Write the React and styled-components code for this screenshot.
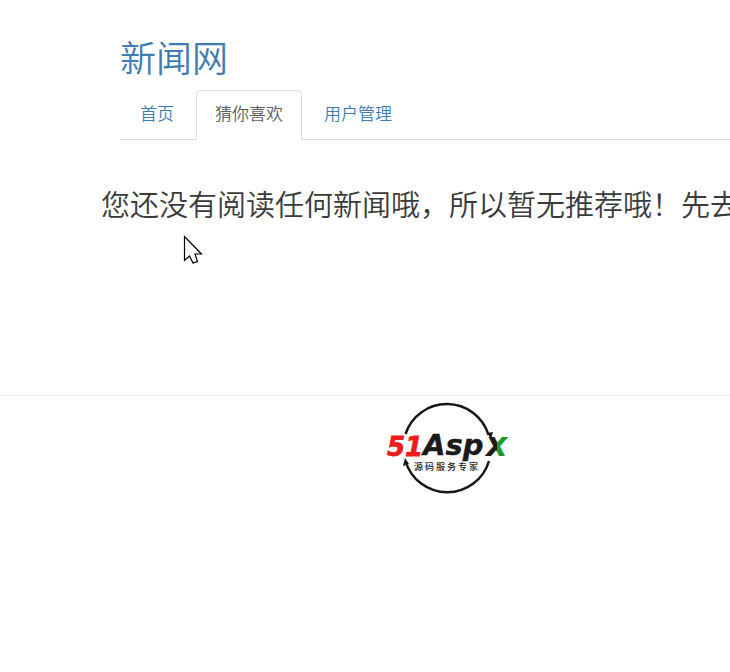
import React from "react";
import styled, { createGlobalStyle } from "styled-components";

const GlobalStyle = createGlobalStyle`
  * { box-sizing: border-box; }
  body {
    margin: 0;
    background: #fff;
    color: #3a3a3a;
    font-family: "Noto Sans CJK SC", sans-serif;
    overflow-x: hidden;
  }
`;

const Page = styled.div`
  position: relative;
  min-height: 100vh;
  overflow: hidden;
`;

const Header = styled.header`
  padding: 32px 0 0 120px;
`;

const Brand = styled.h1`
  margin: 0;
  font-size: 36px;
  font-weight: 350;
  line-height: 48px;
`;

const BrandLink = styled.a`
  color: #417cb0;
  text-decoration: none;
`;

const Tabs = styled.ul`
  display: flex;
  gap: 3px;
  margin: 10px 0 0;
  padding: 0 0 0 1px;
  list-style: none;
  border-bottom: 1px solid #ddd;
`;

const Tab = styled.li`
  margin-bottom: -1px;
`;

const TabLink = styled.a`
  display: block;
  padding: 10px 18px 14px;
  border: 1px solid ${(p) => (p.$active ? "#ddd" : "transparent")};
  border-bottom-color: ${(p) => (p.$active ? "#fff" : "transparent")};
  border-radius: 5px 5px 0 0;
  background: ${(p) => (p.$active ? "#fff" : "transparent")};
  color: ${(p) => (p.$active ? "#5c5c5c" : "#417cb0")};
  font-size: 17px;
  font-weight: 350;
  line-height: 24px;
  text-decoration: none;
`;

const Main = styled.main`
  padding: 43px 0 172px 101px;
`;

const Message = styled.h2`
  margin: 0;
  font-size: 29px;
  font-weight: 350;
  line-height: 40px;
  white-space: nowrap;
`;

const Footer = styled.footer`
  display: flex;
  justify-content: center;
  padding: 5px 0 0 168px;
  border-top: 1px solid #eee;
`;

const Pointer = styled.svg`
  position: absolute;
  left: 183px;
  top: 235px;
`;

function Logo() {
  return (
    <svg width="130" height="94" viewBox="0 0 130 94" role="img" aria-label="51Aspx 源码服务专家">
      <defs>
        <linearGradient id="tail" x1="0" x2="1" y1="0" y2="0">
          <stop offset="0.52" stopColor="#1a1a1a" />
          <stop offset="0.52" stopColor="#20982c" />
        </linearGradient>
      </defs>
      <g fill="none" stroke="#161616" strokeWidth="2.5">
        <path d="M21.5 33A43.5 43.5 0 0 1 104.500 34" />
        <path d="M21.5 60A43.5 43.5 0 0 0 105 60" />
      </g>
      <path d="M103 32 109 31 107 38Z M19 65 21 57 25 63Z" fill="#161616" />
      <g fontFamily="DejaVu Sans" fontWeight="700" fontStyle="italic">
        <text x="3" y="55" fontSize="26" fill="#ef1b1b" stroke="#ef1b1b" strokeWidth="0.8">51</text>
        <text x="39" y="54" fontSize="29" fill="#1a1a1a" stroke="#1a1a1a" strokeWidth="0.4">Asp</text>
        <text x="102" y="55" fontSize="33" fill="url(#tail)">x</text>
      </g>
      <text x="30" y="69" fill="#222" fontFamily="Noto Sans CJK SC" fontWeight="500" fontSize="9" letterSpacing="2">
        源码服务专家
      </text>
    </svg>
  );
}

const tabs = [
  { label: "首页" },
  { label: "猜你喜欢", active: true },
  { label: "用户管理" },
];

export default function App() {
  return (
    <Page>
      <GlobalStyle />
      <Header>
        <Brand>
          <BrandLink href="#home">新闻网</BrandLink>
        </Brand>
        <nav>
          <Tabs>
            {tabs.map((t) => (
              <Tab key={t.label}>
                <TabLink href="#tab" $active={t.active} aria-current={t.active ? "page" : undefined}>
                  {t.label}
                </TabLink>
              </Tab>
            ))}
          </Tabs>
        </nav>
      </Header>
      <Main>
        <Message>您还没有阅读任何新闻哦，所以暂无推荐哦！先去</Message>
      </Main>
      <Footer>
        <Logo />
      </Footer>
      <Pointer width="20" height="30" viewBox="0 0 20 30" aria-hidden="true">
        <path
          d="M1.500 1.500V25.500L6.500 21L10 28L14.500 26.500L12 19H18.500Z"
          fill="#fff"
          stroke="#000"
          strokeWidth="1.200"
        />
      </Pointer>
    </Page>
  );
}
